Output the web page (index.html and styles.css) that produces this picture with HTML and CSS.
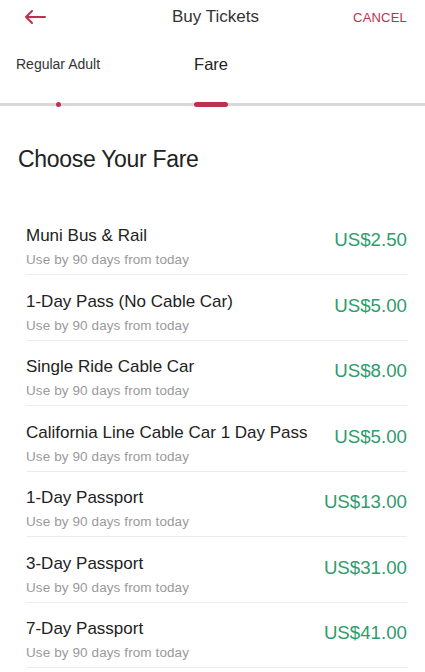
FILE: index.html
```html
<!DOCTYPE html>
<html>
<head>
<meta charset="utf-8">
<link rel="stylesheet" href="styles.css">
</head>
<body>
<header class="topbar">
  <div class="back">
    <svg width="22" height="14" viewBox="0 0 22 14"><path d="M21 7H2M8 1L2 7l6 6" fill="none" stroke="#c0304e" stroke-width="2" stroke-linecap="round" stroke-linejoin="round"/></svg>
  </div>
  <div class="title">Buy Tickets</div>
  <div class="cancel">CANCEL</div>
</header>
<nav class="tabs">
  <div class="tab"><span class="tab-label small">Regular Adult</span><span class="dot"></span></div>
  <div class="tab"><span class="tab-label">Fare</span><span class="pill"></span></div>
</nav>
<h1 class="heading">Choose Your Fare</h1>
<ul class="fares">
  <li class="fare"><div class="info"><div class="name">Muni Bus &amp; Rail</div><div class="sub">Use by 90 days from today</div></div><div class="price">US$2.50</div></li>
  <li class="fare"><div class="info"><div class="name">1-Day Pass (No Cable Car)</div><div class="sub">Use by 90 days from today</div></div><div class="price">US$5.00</div></li>
  <li class="fare"><div class="info"><div class="name">Single Ride Cable Car</div><div class="sub">Use by 90 days from today</div></div><div class="price">US$8.00</div></li>
  <li class="fare"><div class="info"><div class="name">California Line Cable Car 1 Day Pass</div><div class="sub">Use by 90 days from today</div></div><div class="price">US$5.00</div></li>
  <li class="fare"><div class="info"><div class="name">1-Day Passport</div><div class="sub">Use by 90 days from today</div></div><div class="price">US$13.00</div></li>
  <li class="fare"><div class="info"><div class="name">3-Day Passport</div><div class="sub">Use by 90 days from today</div></div><div class="price">US$31.00</div></li>
  <li class="fare"><div class="info"><div class="name">7-Day Passport</div><div class="sub">Use by 90 days from today</div></div><div class="price">US$41.00</div></li>
</ul>
</body>
</html>
```
FILE: styles.css
```css
* { box-sizing: border-box; }
html, body { margin: 0; padding: 0; background: #fff; }
body {
  font-family: "Liberation Sans", Arial, sans-serif;
  color: #222;
  width: 425px;
  overflow: hidden;
}
.topbar {
  display: grid;
  grid-template-columns: 1fr auto 1fr;
  align-items: center;
  height: 34px;
  padding: 0 18px 0 24px;
}
.back { display: flex; align-items: center; }
.back svg { display: block; }
.title { font-size: 17px; color: #333; }
.cancel {
  justify-self: end;
  font-size: 13px;
  color: #c0304e;
  letter-spacing: 0.2px;
}
.tabs {
  display: flex;
  gap: 94px;
  padding-left: 16px;
  height: 73px;
  background: linear-gradient(#d8d8d8, #d8d8d8) 0 69px / 100% 3px no-repeat;
}
.tab {
  display: flex;
  flex-direction: column;
  align-items: center;
  justify-content: space-between;
  padding-top: 20px;
}
.tab-label { font-size: 16.5px; line-height: 20px; color: #222; }
.tab-label.small { font-size: 14px; color: #333; }
.dot { width: 5px; height: 5px; border-radius: 50%; background: #c0304e; }
.pill { width: 34px; height: 5px; border-radius: 3px; background: #c0304e; }
.heading {
  margin: 0;
  padding: 38px 0 0 18px;
  font-size: 23px;
  line-height: 28px;
  font-weight: normal;
  letter-spacing: -0.3px;
  color: #222;
}
.fares {
  list-style: none;
  margin: 0;
  padding: 0;
  margin-top: 36.5px;
}
.fare {
  display: flex;
  align-items: flex-start;
  justify-content: space-between;
  height: 65.5px;
  margin: 0 18px 0 26px;
  border-bottom: 1px solid #ececec;
}
.info { display: flex; flex-direction: column; gap: 6px; padding-top: 16.5px; }
.name { font-size: 17px; line-height: 20px; color: #222; }
.sub { font-size: 13.5px; line-height: 16px; color: #9a9a9a; letter-spacing: 0.1px; }
.price { font-size: 18.7px; line-height: 22px; padding-top: 19.5px; color: #2e9c6c; }
```
